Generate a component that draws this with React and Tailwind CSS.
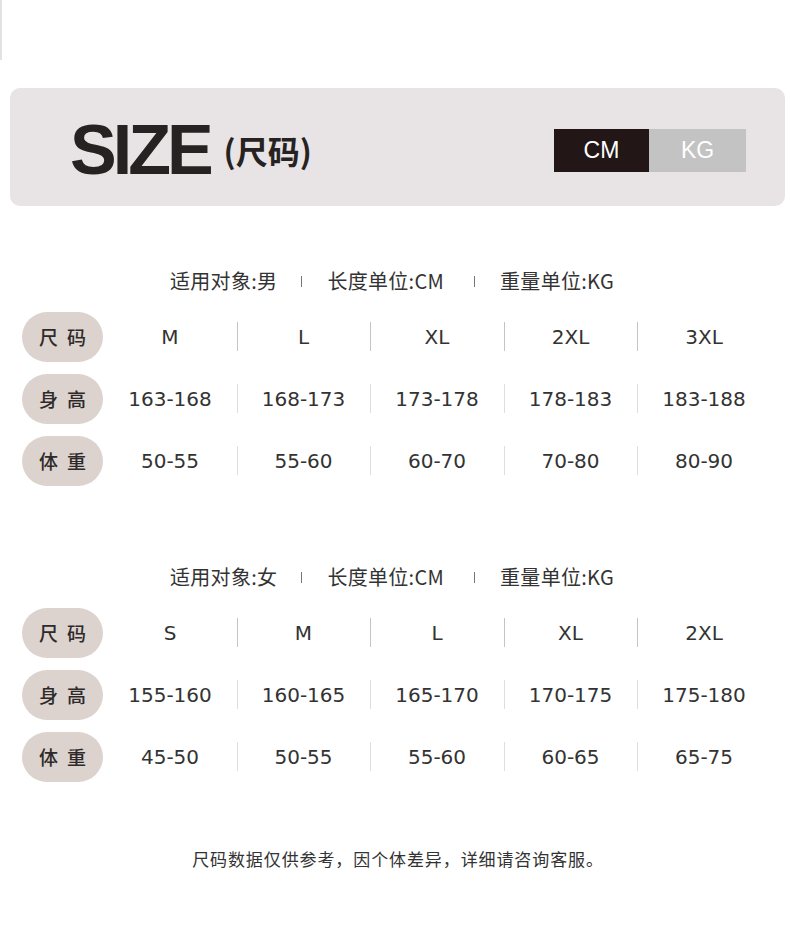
const men = [
  ['M', 'L', 'XL', '2XL', '3XL'],
  ['163-168', '168-173', '173-178', '178-183', '183-188'],
  ['50-55', '55-60', '60-70', '70-80', '80-90'],
]

const women = [
  ['S', 'M', 'L', 'XL', '2XL'],
  ['155-160', '160-165', '165-170', '170-175', '175-180'],
  ['45-50', '50-55', '55-60', '60-65', '65-75'],
]

const labels = [['尺', '码'], ['身', '高'], ['体', '重']]

const cjk = "font-['Noto_Sans_CJK_SC',sans-serif]"

function SubHeader({ who }) {
  return (
    <div className={`flex items-center h-[26px] pl-[170px] text-[20px] tracking-[0.3px] text-[#333] ${cjk}`}>
      <span>适用对象:{who}</span>
      <span className="ml-[24px] w-px h-[11px] bg-[#777]" />
      <span className="ml-[25px]">长度单位:CM</span>
      <span className="ml-[30px] w-px h-[11px] bg-[#777]" />
      <span className="ml-[25px]">重量单位:KG</span>
    </div>
  )
}

function SizeTable({ data }) {
  return (
    <div className="flex flex-col gap-[12px] pl-[22px]">
      {data.map((row, r) => (
        <div key={r} className="grid grid-cols-[81px_134px_133px_134px_133px_134px] h-[50px] items-center">
          <div className={`h-[50px] rounded-full bg-[#dcd2ce] flex items-center justify-center gap-[9px] text-[19px] font-medium text-[#2e2a2a] ${cjk}`}>
            <span>{labels[r][0]}</span>
            <span>{labels[r][1]}</span>
          </div>
          {row.map((v, i) => (
            <div key={i} className="relative h-full flex items-center justify-center">
              {i > 0 && (
                <span className={`absolute left-0 top-[10px] h-[29px] w-px ${r === 0 ? 'bg-[#c4c4c4]' : 'bg-[#dedede]'}`} />
              )}
              <span className="font-['DejaVu_Sans',sans-serif] text-[20px] text-[#333]">{v}</span>
            </div>
          ))}
        </div>
      ))}
    </div>
  )
}

export default function App() {
  return (
    <div className="w-[790px] h-[936px] bg-white overflow-hidden">
      <div className="h-[88px]">
        <div className="w-[2px] h-[60px] bg-[#e2e2e2]" />
      </div>

      {/* 标题栏 */}
      <div className="ml-[10px] mr-[5px] h-[118px] rounded-[10px] bg-[#e8e3e4] flex items-center pl-[60px] pr-[39px]">
        <span className="font-['Liberation_Sans',sans-serif] font-bold text-[70px] tracking-[-4px] text-[#262222] leading-none mt-[6px]">SIZE</span>
        <span className={`ml-[14px] text-[32px] font-bold text-[#262222] ${cjk} mt-[6px]`}>(尺码)</span>
        <div className="ml-auto flex h-[43px] mt-[6px]">
          <div className="w-[95px] bg-[#221616] text-white flex items-center justify-center text-[23px] font-['Liberation_Sans_Narrow','Liberation_Sans',sans-serif]">CM</div>
          <div className="w-[97px] bg-[#c3c3c3] text-white flex items-center justify-center text-[23px] font-['Liberation_Sans_Narrow','Liberation_Sans',sans-serif]">KG</div>
        </div>
      </div>

      <div className="mt-[62px]">
        <SubHeader who="男" />
      </div>
      <div className="mt-[18px]">
        <SizeTable data={men} />
      </div>

      <div className="mt-[78px]">
        <SubHeader who="女" />
      </div>
      <div className="mt-[18px]">
        <SizeTable data={women} />
      </div>

      <p className={`mt-[64px] h-[24px] text-center pl-[6px] text-[17px] tracking-[0.9px] text-[#333] ${cjk}`}>
        尺码数据仅供参考，因个体差异，详细请咨询客服。
      </p>
    </div>
  )
}
